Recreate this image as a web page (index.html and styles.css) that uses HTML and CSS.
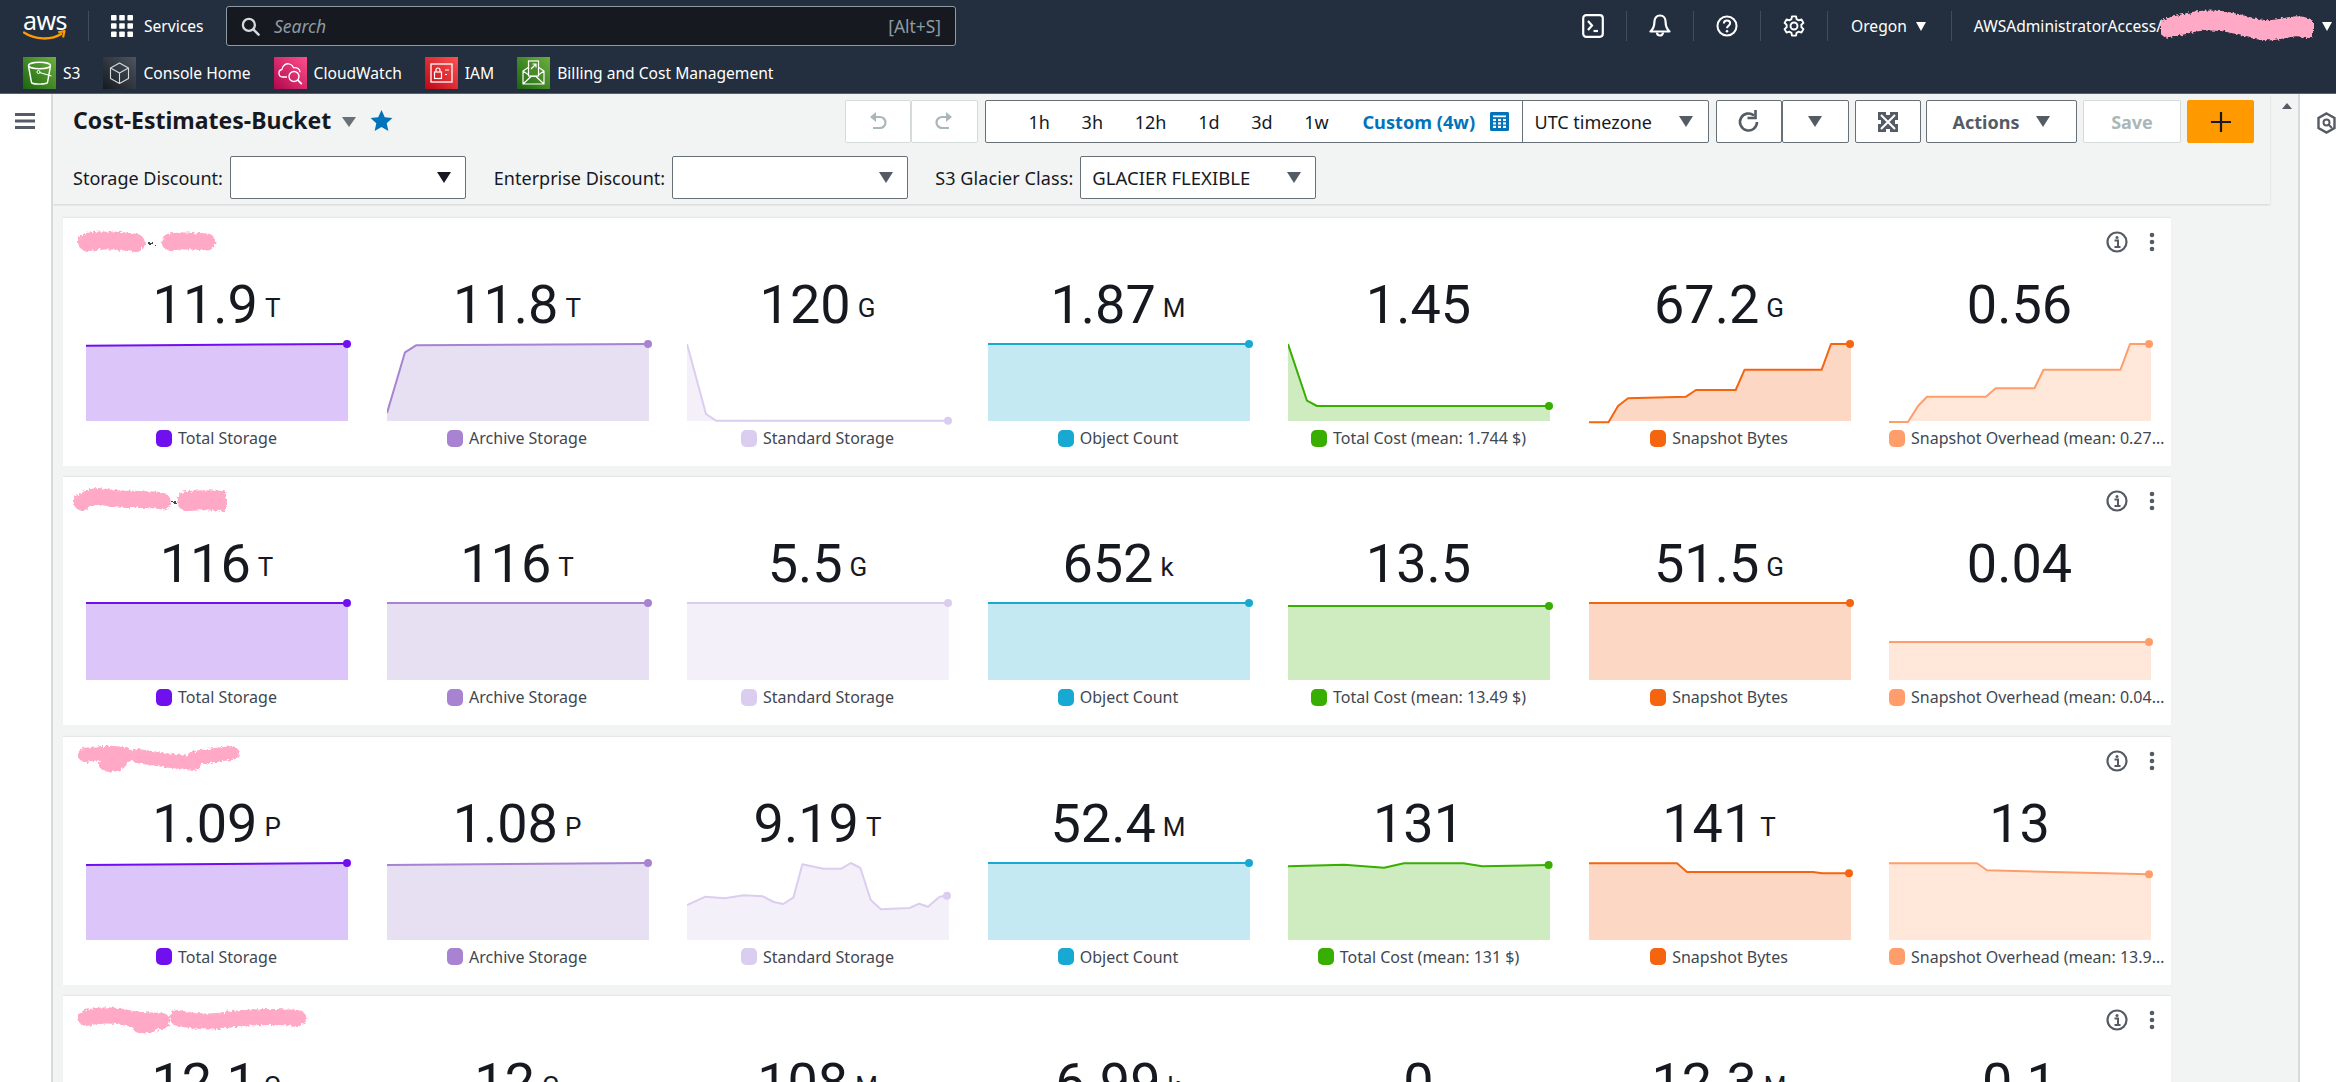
FILE: index.html
```html
<!DOCTYPE html>
<html lang="en">
<head>
<meta charset="utf-8">
<title>Cost-Estimates-Bucket</title>
<link rel="stylesheet" href="styles.css">
</head>
<body>
<header class="topnav">
  <div class="navrow">
    <a class="logo"><span class="logo-text">aws</span>
      <svg class="smile" viewBox="0 0 44 12"><path d="M1 2.5C12 10 29 10.5 39 4" fill="none" stroke="#f90" stroke-width="2.4" stroke-linecap="round"/><path d="M36 2.2L42.5 1 41 7.5" fill="none" stroke="#f90" stroke-width="2.2" stroke-linejoin="round"/></svg>
    </a>
    <span class="sep sep-logo"></span>
    <svg class="grid-ico" viewBox="0 0 22 22"><g fill="#fff"><rect width="5.6" height="5.6" rx=".8"/><rect x="8.2" width="5.6" height="5.6" rx=".8"/><rect x="16.4" width="5.6" height="5.6" rx=".8"/><rect y="8.2" width="5.6" height="5.6" rx=".8"/><rect x="8.2" y="8.2" width="5.6" height="5.6" rx=".8"/><rect x="16.4" y="8.2" width="5.6" height="5.6" rx=".8"/><rect y="16.4" width="5.6" height="5.6" rx=".8"/><rect x="8.2" y="16.4" width="5.6" height="5.6" rx=".8"/><rect x="16.4" y="16.4" width="5.6" height="5.6" rx=".8"/></g></svg>
    <span class="services">Services</span>
    <div class="search">
      <svg class="search-ico" viewBox="0 0 20 20"><circle cx="8.3" cy="8.3" r="6.3" fill="none" stroke="#d5dbdb" stroke-width="2.4"/><path d="M13 13l5.5 5.5" stroke="#d5dbdb" stroke-width="2.6" stroke-linecap="round"/></svg>
      <span class="search-ph">Search</span>
      <span class="search-key">[Alt+S]</span>
    </div>
    <div class="navright">
      <svg class="nav-ico" viewBox="0 0 22 24"><rect x="1.2" y="1.2" width="19.6" height="21.6" rx="3" fill="none" stroke="#fff" stroke-width="2.2"/><path d="M6 7l4 4.5L6 16" fill="none" stroke="#fff" stroke-width="2.2"/><path d="M11.5 17h4.5" stroke="#fff" stroke-width="2.2"/></svg>
      <span class="sep"></span>
      <svg class="nav-ico" viewBox="0 0 22 24"><path d="M11 1.5c-3.6 0-5.6 2.800-5.6 6.500 0 4-.8 6.500-3.900 9.500h19c-3.100-3-3.900-5.500-3.900-9.500 0-3.700-2-6.500-5.600-6.500z" fill="none" stroke="#fff" stroke-width="2.200" stroke-linejoin="round"/><path d="M8 18.500a3 3 0 0 0 6 0" fill="none" stroke="#fff" stroke-width="2.200"/></svg>
      <span class="sep"></span>
      <svg class="nav-ico" viewBox="0 0 24 24"><circle cx="12" cy="12" r="10.400" fill="none" stroke="#fff" stroke-width="2.200"/><path d="M8.600 9.300c0-2 1.500-3.200 3.400-3.200s3.400 1.200 3.400 3c0 2.700-3.400 2.700-3.400 5.400" fill="none" stroke="#fff" stroke-width="2.200"/><circle cx="12" cy="17.800" r="1.400" fill="#fff"/></svg>
      <span class="sep"></span>
      <svg class="nav-ico" viewBox="0 0 24 24"><path d="M9.800 1.500h4.400l.6 3 2.400 1.300 2.900-1 2.200 3.800-2.300 2 .1 2.800 2.200 2-2.200 3.800-2.900-1-2.400 1.300-.6 3H9.800l-.6-3-2.400-1.300-2.900 1-2.200-3.800 2.300-2-.1-2.800-2.200-2 2.200-3.800 2.900 1 2.400-1.300z" fill="none" stroke="#fff" stroke-width="2.100" stroke-linejoin="round"/><circle cx="12" cy="12" r="3.800" fill="none" stroke="#fff" stroke-width="2.100"/></svg>
      <span class="sep"></span>
      <span class="region">Oregon</span><span class="caret caret-white"></span>
      <span class="sep sep-user"></span>
      <span class="account">AWSAdministratorAccess/</span>
      <svg class="blob blob-user" width="152" height="32" viewBox="0 0 152 32"><defs><filter id="rough" x="-10%" y="-30%" width="120%" height="160%"><feTurbulence type="fractalNoise" baseFrequency=".35" numOctaves="2" seed="4"/><feDisplacementMap in="SourceGraphic" scale="5"/></filter></defs><path d="M8 18C30 12 40 9 60 11S95 22 112 20 134 14 145 18" fill="none" stroke="#ffa9c6" stroke-width="20" stroke-linecap="round"/></svg>
      <span class="caret caret-white caret-user"></span>
    </div>
  </div>
  <div class="navrow favs">
    <a class="fav"><svg class="tile" viewBox="0 0 33 32"><defs><linearGradient id="g1" x1="0" y1="1" x2="1" y2="0"><stop offset="0" stop-color="#1b660f"/><stop offset="1" stop-color="#6cae3e"/></linearGradient></defs><rect width="33" height="32" fill="url(#g1)"/><path d="M5.500 9l3 16.500c.2 1 6 1.600 8 1.600s7.800-.6 8-1.600l3-16.500" fill="none" stroke="#fff" stroke-width="1.400"/><ellipse cx="16.500" cy="8.500" rx="11" ry="3.200" fill="none" stroke="#fff" stroke-width="1.400"/><circle cx="15.500" cy="15" r="1.500" fill="none" stroke="#fff"/><path d="M16.500 15.500l12 3.500" stroke="#fff" stroke-width="1.200"/></svg><span>S3</span></a>
    <a class="fav"><svg class="tile" viewBox="0 0 33 32"><defs><linearGradient id="g2" x1="0" y1="1" x2="1" y2="0"><stop offset="0" stop-color="#16191f"/><stop offset="1" stop-color="#4d5560"/></linearGradient></defs><rect width="33" height="32" fill="url(#g2)"/><path d="M16.500 6l9 5v10.500l-9 5-9-5V11zM7.500 11l9 5 9-5M16.500 16v10.500" fill="none" stroke="#d5dbdb" stroke-width="1.100" stroke-linejoin="round"/></svg><span>Console Home</span></a>
    <a class="fav"><svg class="tile" viewBox="0 0 33 32"><defs><linearGradient id="g3" x1="0" y1="1" x2="1" y2="0"><stop offset="0" stop-color="#b0084d"/><stop offset="1" stop-color="#ff4f8b"/></linearGradient></defs><rect width="33" height="32" fill="url(#g3)"/><path d="M13 20H8.500a3.800 3.800 0 0 1-.6-7.500C8.500 8.500 12 6 15.500 7c2 .6 3.500 2 4 3.700 3.500-.7 6.500 1.500 6.500 4.500" fill="none" stroke="#fff" stroke-width="1.300"/><circle cx="20" cy="19.500" r="5" fill="none" stroke="#fff" stroke-width="1.400"/><path d="M23.800 23.200l4 4" stroke="#fff" stroke-width="1.800"/></svg><span>CloudWatch</span></a>
    <a class="fav"><svg class="tile" viewBox="0 0 33 32"><defs><linearGradient id="g4" x1="0" y1="1" x2="1" y2="0"><stop offset="0" stop-color="#bd0816"/><stop offset="1" stop-color="#ff5252"/></linearGradient></defs><rect width="33" height="32" fill="url(#g4)"/><rect x="6" y="7" width="21" height="18" fill="none" stroke="#fff" stroke-width="1.300"/><rect x="9.500" y="15" width="7" height="6.500" fill="none" stroke="#fff" stroke-width="1.200"/><path d="M11 15v-2a2 2 0 0 1 4 0v2M20 13h4M20 17.500h2" fill="none" stroke="#fff" stroke-width="1.200"/></svg><span>IAM</span></a>
    <a class="fav"><svg class="tile" viewBox="0 0 33 32"><defs><linearGradient id="g5" x1="0" y1="1" x2="1" y2="0"><stop offset="0" stop-color="#1b660f"/><stop offset="1" stop-color="#6cae3e"/></linearGradient></defs><rect width="33" height="32" fill="url(#g5)"/><path d="M6 14v13h21V14l-10.500-7zM6 27l8-7.500h5L27 27M6 14l8 5.500M27 14l-8 5.500" fill="none" stroke="#fff" stroke-width="1.200" stroke-linejoin="round"/><rect x="11.500" y="4" width="10" height="15" fill="#4a8a28" stroke="#fff" stroke-width="1.200"/><path d="M14 12l5-5M15.500 7H19v3.500" fill="none" stroke="#fff" stroke-width="1.200"/></svg><span>Billing and Cost Management</span></a>
  </div>
</header>

<div class="main">
  <aside class="sidebar">
    <svg class="burger" viewBox="0 0 20 16"><path d="M0 1.500h20M0 8h20M0 14.500h20" stroke="#545b64" stroke-width="3"/></svg>
  </aside>

  <div class="content">
    <section class="toolbar">
      <div class="bar-row">
        <h1 class="title">Cost-Estimates-Bucket</h1>
        <span class="caret caret-title"></span>
        <svg class="star" viewBox="0 0 24 23"><path d="M12 0l3.600 8 8.400.800-6.300 5.700 1.800 8.500L12 18.600 4.500 23l1.800-8.500L0 8.800 8.400 8z" fill="#0073bb"/></svg>
        <div class="controls">
          <div class="btn-pair">
            <button class="btn btn-off btn-icon"><svg class="ico" viewBox="0 0 20 22"><path d="M3 6h9a5.500 5.500 0 0 1 0 11H5" fill="none" stroke="#aab7b8" stroke-width="2.200"/><path d="M8 1L2 6l6 5z" fill="#aab7b8"/></svg></button>
            <button class="btn btn-off btn-icon"><svg class="ico" viewBox="0 0 20 22"><path d="M17 6H8a5.500 5.500 0 0 0 0 11h7" fill="none" stroke="#aab7b8" stroke-width="2.200"/><path d="M12 1l6 5-6 5z" fill="#aab7b8"/></svg></button>
          </div>
          <div class="timebox">
            <div class="ranges">
              <span class="range">1h</span><span class="range">3h</span><span class="range">12h</span><span class="range">1d</span><span class="range">3d</span><span class="range">1w</span>
              <span class="range range-on">Custom (4w)</span>
              <svg class="cal" viewBox="0 0 19 22" preserveAspectRatio="none"><rect width="19" height="22" rx="1.500" fill="#0073bb"/><g fill="#fff"><rect x="3" y="4" width="13" height="2"/><rect x="3" y="8" width="3" height="2.500"/><rect x="8" y="8" width="3" height="2.500"/><rect x="13" y="8" width="3" height="2.500"/><rect x="3" y="12" width="3" height="2.500"/><rect x="8" y="12" width="3" height="2.500"/><rect x="13" y="12" width="3" height="2.500"/><rect x="3" y="16" width="3" height="2.500"/><rect x="8" y="16" width="3" height="2.500"/><rect x="13" y="16" width="3" height="2.500"/></g></svg>
            </div>
            <div class="tz"><span>UTC timezone</span><span class="caret"></span></div>
          </div>
          <div class="btn-pair">
            <button class="btn btn-icon"><svg class="ico ico-lg" viewBox="0 0 24 24"><path d="M20 12a8.500 8.500 0 1 1-3-6.500" fill="none" stroke="#545b64" stroke-width="2.600"/><path d="M18.500 0v8h-8" fill="none" stroke="#545b64" stroke-width="2.600"/></svg></button>
            <button class="btn btn-icon"><span class="caret"></span></button>
          </div>
          <button class="btn btn-icon btn-tight"><svg class="ico ico-exp" viewBox="0 0 20 20"><rect width="20" height="20" fill="#545b64"/><path d="M3 3l14 14M17 3L3 17" stroke="#fff" stroke-width="2"/><path d="M8 0v3h4V0M8 20v-3h4v3M0 8h3v4H0M20 8h-3v4h3" fill="#fff"/></svg></button>
          <button class="btn btn-actions btn-tight"><span>Actions</span><span class="caret"></span></button>
          <button class="btn btn-off btn-save">Save</button>
          <button class="btn btn-add"><svg class="ico" viewBox="0 0 20 20"><path d="M10 0v20M0 10h20" stroke="#16191f" stroke-width="2.200"/></svg></button>
        </div>
      </div>
      <div class="bar-row">
        <label class="lbl">Storage Discount:</label>
        <div class="select"><span class="caret caret-dark"></span></div>
        <label class="lbl lbl-next">Enterprise Discount:</label>
        <div class="select"><span class="caret"></span></div>
        <label class="lbl lbl-next lbl-wide">S3 Glacier Class:</label>
        <div class="select"><span>GLACIER FLEXIBLE</span><span class="caret"></span></div>
      </div>
    </section>

    <div class="panels">
      <!-- row 1 -->
      <article class="panel">
        <div class="panel-head">
          <svg class="blob" width="150" height="30" viewBox="0 0 150 30"><path d="M9 15c14-2 30-2 49 1" fill="none" stroke="#ffa9c6" stroke-width="18" stroke-linecap="round"/><path d="M92 15c15-2 24-1 37 0" fill="none" stroke="#ffa9c6" stroke-width="17" stroke-linecap="round"/><path d="M70 16h6" stroke="#414750" stroke-width="2"/></svg>
          <svg class="info" viewBox="0 0 22 22"><circle cx="11" cy="11" r="9.500" fill="none" stroke="#545b64" stroke-width="2.200"/><circle cx="11" cy="6.500" r="1.500" fill="#545b64"/><path d="M8.500 9.500H12v6M8.500 16h6" fill="none" stroke="#545b64" stroke-width="2"/></svg>
          <svg class="kebab" viewBox="0 0 6 20"><circle cx="3" cy="3" r="2.300" fill="#545b64"/><circle cx="3" cy="10" r="2.300" fill="#545b64"/><circle cx="3" cy="17" r="2.300" fill="#545b64"/></svg>
        </div>
        <div class="widgets">
          <div class="widget s1"><div class="value">11.9<small>T</small></div><svg class="spark" viewBox="0 -4 266 86"><polygon class="area" points="0,1.700 262,0 262,77 0,77"/><polyline class="line" points="0,1.700 261,0"/><circle class="dot" cx="261" cy="0" r="4"/></svg><div class="legend"><i></i>Total Storage</div></div>
          <div class="widget s2"><div class="value">11.8<small>T</small></div><svg class="spark" viewBox="0 -4 266 86"><polygon class="area" points="0,69 18,8.300 29,1.300 262,0 262,77 0,77"/><polyline class="line" points="0,69 18,8.300 29,1.300 261,0"/><circle class="dot" cx="261" cy="0" r="4"/></svg><div class="legend"><i></i>Archive Storage</div></div>
          <div class="widget s3"><div class="value">120<small>G</small></div><svg class="spark" viewBox="0 -4 266 86"><polygon class="area" points="0,0 19,70 29,76.700 262,76.700 262,77 0,77"/><polyline class="line" points="0,0 19,70 29,76.700 261,76.700"/><circle class="dot" cx="261" cy="76.700" r="4"/></svg><div class="legend"><i></i>Standard Storage</div></div>
          <div class="widget s4"><div class="value">1.87<small>M</small></div><svg class="spark" viewBox="0 -4 266 86"><polygon class="area" points="0,0 262,0 262,77 0,77"/><polyline class="line" points="0,0 261,0"/><circle class="dot" cx="261" cy="0" r="4"/></svg><div class="legend"><i></i>Object Count</div></div>
          <div class="widget s5"><div class="value">1.45</div><svg class="spark" viewBox="0 -4 266 86"><polygon class="area" points="0,0 19,56.700 29,62 262,62 262,77 0,77"/><polyline class="line" points="0,0 19,56.700 29,62 261,62"/><circle class="dot" cx="261" cy="62" r="4"/></svg><div class="legend"><i></i>Total Cost (mean: 1.744 $)</div></div>
          <div class="widget s6"><div class="value">67.2<small>G</small></div><svg class="spark" viewBox="0 -4 266 86"><polygon class="area" points="19.500,77 29,62 39,54.300 97,52.700 107,46 146.700,46 155.600,25.700 232.700,25.700 242,0 262,0 262,77"/><polyline class="line" points="0,78.300 19.500,78.300 29,62 39,54.300 97,52.700 107,46 146.700,46 155.600,25.700 232.700,25.700 242,0 261,0"/><circle class="dot" cx="261" cy="0" r="4"/></svg><div class="legend"><i></i>Snapshot Bytes</div></div>
          <div class="widget s7"><div class="value">0.56</div><svg class="spark" viewBox="0 -4 266 86"><polygon class="area" points="19,77 29,62 38,52.700 97,52.700 106.600,44.300 145.500,44.300 154.500,25.700 231.500,25.700 241,0 262,0 262,77"/><polyline class="line" points="0,78 19,78 29,62 38,52.700 97,52.700 106.600,44.300 145.500,44.300 154.500,25.700 231.500,25.700 241,0 260,0"/><circle class="dot" cx="260" cy="0" r="4"/></svg><div class="legend"><i></i>Snapshot Overhead (mean: 0.27…</div></div>
        </div>
      </article>
      <!-- row 2 -->
      <article class="panel">
        <div class="panel-head">
          <svg class="blob blob-r2" width="152" height="30" viewBox="0 0 152 30"><path d="M8 16c8-5 14-7 28-4 24 3 38 0 52 3" fill="none" stroke="#ffa9c6" stroke-width="17" stroke-linecap="round"/><path d="M113 15c12-1 24-1 36 0" fill="none" stroke="#ffa9c6" stroke-width="20" stroke-linecap="round"/><path d="M98 16h4" stroke="#414750" stroke-width="2"/></svg>
          <svg class="info" viewBox="0 0 22 22"><circle cx="11" cy="11" r="9.500" fill="none" stroke="#545b64" stroke-width="2.200"/><circle cx="11" cy="6.500" r="1.500" fill="#545b64"/><path d="M8.500 9.500H12v6M8.500 16h6" fill="none" stroke="#545b64" stroke-width="2"/></svg>
          <svg class="kebab" viewBox="0 0 6 20"><circle cx="3" cy="3" r="2.300" fill="#545b64"/><circle cx="3" cy="10" r="2.300" fill="#545b64"/><circle cx="3" cy="17" r="2.300" fill="#545b64"/></svg>
        </div>
        <div class="widgets">
          <div class="widget s1"><div class="value">116<small>T</small></div><svg class="spark" viewBox="0 -4 266 86"><polygon class="area" points="0,0 262,0 262,77 0,77"/><polyline class="line" points="0,0 261,0"/><circle class="dot" cx="261" cy="0" r="4"/></svg><div class="legend"><i></i>Total Storage</div></div>
          <div class="widget s2"><div class="value">116<small>T</small></div><svg class="spark" viewBox="0 -4 266 86"><polygon class="area" points="0,0 262,0 262,77 0,77"/><polyline class="line" points="0,0 261,0"/><circle class="dot" cx="261" cy="0" r="4"/></svg><div class="legend"><i></i>Archive Storage</div></div>
          <div class="widget s3"><div class="value">5.5<small>G</small></div><svg class="spark" viewBox="0 -4 266 86"><polygon class="area" points="0,0 262,0 262,77 0,77"/><polyline class="line" points="0,0 261,0"/><circle class="dot" cx="261" cy="0" r="4"/></svg><div class="legend"><i></i>Standard Storage</div></div>
          <div class="widget s4"><div class="value">652<small>k</small></div><svg class="spark" viewBox="0 -4 266 86"><polygon class="area" points="0,0 262,0 262,77 0,77"/><polyline class="line" points="0,0 261,0"/><circle class="dot" cx="261" cy="0" r="4"/></svg><div class="legend"><i></i>Object Count</div></div>
          <div class="widget s5"><div class="value">13.5</div><svg class="spark" viewBox="0 -4 266 86"><polygon class="area" points="0,3 262,3 262,77 0,77"/><polyline class="line" points="0,3 261,3"/><circle class="dot" cx="261" cy="3" r="4"/></svg><div class="legend"><i></i>Total Cost (mean: 13.49 $)</div></div>
          <div class="widget s6"><div class="value">51.5<small>G</small></div><svg class="spark" viewBox="0 -4 266 86"><polygon class="area" points="0,0 262,0 262,77 0,77"/><polyline class="line" points="0,0 261,0"/><circle class="dot" cx="261" cy="0" r="4"/></svg><div class="legend"><i></i>Snapshot Bytes</div></div>
          <div class="widget s7"><div class="value">0.04</div><svg class="spark" viewBox="0 -4 266 86"><polygon class="area" points="0,39 262,39 262,77 0,77"/><polyline class="line" points="0,39 260,39"/><circle class="dot" cx="260" cy="39" r="4"/></svg><div class="legend"><i></i>Snapshot Overhead (mean: 0.04…</div></div>
        </div>
      </article>
      <!-- row 3 -->
      <article class="panel">
        <div class="panel-head">
          <svg class="blob" width="162" height="30" viewBox="0 0 162 30"><path d="M7 9c16-3 30-3 42 0M28 18c6 2 10 1 14-2M60 10c18 3 40 6 56 7M116 12c12-1 24-4 38-5" fill="none" stroke="#ffa9c6" stroke-width="14" stroke-linecap="round"/></svg>
          <svg class="info" viewBox="0 0 22 22"><circle cx="11" cy="11" r="9.500" fill="none" stroke="#545b64" stroke-width="2.200"/><circle cx="11" cy="6.500" r="1.500" fill="#545b64"/><path d="M8.500 9.500H12v6M8.500 16h6" fill="none" stroke="#545b64" stroke-width="2"/></svg>
          <svg class="kebab" viewBox="0 0 6 20"><circle cx="3" cy="3" r="2.300" fill="#545b64"/><circle cx="3" cy="10" r="2.300" fill="#545b64"/><circle cx="3" cy="17" r="2.300" fill="#545b64"/></svg>
        </div>
        <div class="widgets">
          <div class="widget s1"><div class="value">1.09<small>P</small></div><svg class="spark" viewBox="0 -4 266 86"><polygon class="area" points="0,2 262,0 262,77 0,77"/><polyline class="line" points="0,2 261,0"/><circle class="dot" cx="261" cy="0" r="4"/></svg><div class="legend"><i></i>Total Storage</div></div>
          <div class="widget s2"><div class="value">1.08<small>P</small></div><svg class="spark" viewBox="0 -4 266 86"><polygon class="area" points="0,2 262,0 262,77 0,77"/><polyline class="line" points="0,2 261,0"/><circle class="dot" cx="261" cy="0" r="4"/></svg><div class="legend"><i></i>Archive Storage</div></div>
          <div class="widget s3"><div class="value">9.19<small>T</small></div><svg class="spark" viewBox="0 -4 266 86"><polygon class="area" points="0,42 18.500,33.700 37.600,35.300 56.800,32.300 75.900,33.300 86.700,39 96.300,41 106.500,34.300 115.400,1.300 136.400,5.700 154.300,5.700 163.800,0 173.400,5 183.700,37 193.900,46.300 222.600,45 232.200,40.700 241,43.700 252.600,33.700 262,32.700 262,77 0,77"/><polyline class="line" points="0,42 18.500,33.700 37.600,35.300 56.800,32.300 75.900,33.300 86.700,39 96.300,41 106.500,34.300 115.400,1.300 136.400,5.700 154.300,5.700 163.800,0 173.400,5 183.700,37 193.900,46.300 222.600,45 232.200,40.700 241,43.700 252.600,33.700 260,32.700"/><circle class="dot" cx="260" cy="32.700" r="4"/></svg><div class="legend"><i></i>Standard Storage</div></div>
          <div class="widget s4"><div class="value">52.4<small>M</small></div><svg class="spark" viewBox="0 -4 266 86"><polygon class="area" points="0,0 262,0 262,77 0,77"/><polyline class="line" points="0,0 261,0"/><circle class="dot" cx="261" cy="0" r="4"/></svg><div class="legend"><i></i>Object Count</div></div>
          <div class="widget s5"><div class="value">131</div><svg class="spark" viewBox="0 -4 266 86"><polygon class="area" points="0,3.300 56,1.700 96,4.700 116,.3 175.600,.3 194,3.300 262,2 262,77 0,77"/><polyline class="line" points="0,3.300 56,1.700 96,4.700 116,.3 175.600,.3 194,3.300 260.600,2"/><circle class="dot" cx="260.600" cy="2" r="4"/></svg><div class="legend"><i></i>Total Cost (mean: 131 $)</div></div>
          <div class="widget s6"><div class="value">141<small>T</small></div><svg class="spark" viewBox="0 -4 266 86"><polygon class="area" points="0,.3 88,.3 98,9 224,9 233,10.300 262,10.300 262,77 0,77"/><polyline class="line" points="0,.3 88,.3 98,9 224,9 233,10.300 260,10.300"/><circle class="dot" cx="260" cy="10.300" r="4"/></svg><div class="legend"><i></i>Snapshot Bytes</div></div>
          <div class="widget s7"><div class="value">13</div><svg class="spark" viewBox="0 -4 266 86"><polygon class="area" points="0,.3 88,.3 98,7.300 262,11.300 262,77 0,77"/><polyline class="line" points="0,.3 88,.3 98,7.300 260,11.300"/><circle class="dot" cx="260" cy="11.300" r="4"/></svg><div class="legend"><i></i>Snapshot Overhead (mean: 13.9…</div></div>
        </div>
      </article>
      <!-- row 4 -->
      <article class="panel">
        <div class="panel-head">
          <svg class="blob" width="228" height="30" viewBox="0 0 228 30"><path d="M8 13c16-4 30-3 42 0 14 3 24 2 34 3M62 20c6 1 10 0 14-2M100 13c14 3 30 5 48 2 20-3 46-4 72-2" fill="none" stroke="#ffa9c6" stroke-width="16" stroke-linecap="round"/></svg>
          <svg class="info" viewBox="0 0 22 22"><circle cx="11" cy="11" r="9.500" fill="none" stroke="#545b64" stroke-width="2.200"/><circle cx="11" cy="6.500" r="1.500" fill="#545b64"/><path d="M8.500 9.500H12v6M8.500 16h6" fill="none" stroke="#545b64" stroke-width="2"/></svg>
          <svg class="kebab" viewBox="0 0 6 20"><circle cx="3" cy="3" r="2.300" fill="#545b64"/><circle cx="3" cy="10" r="2.300" fill="#545b64"/><circle cx="3" cy="17" r="2.300" fill="#545b64"/></svg>
        </div>
        <div class="widgets">
          <div class="widget"><div class="value">12.1<small>G</small></div></div>
          <div class="widget"><div class="value">12<small>G</small></div></div>
          <div class="widget"><div class="value">108<small>M</small></div></div>
          <div class="widget"><div class="value">6.99<small>k</small></div></div>
          <div class="widget"><div class="value">0</div></div>
          <div class="widget"><div class="value">12.3<small>M</small></div></div>
          <div class="widget"><div class="value">0.1</div></div>
        </div>
      </article>
    </div>
    <span class="scroll-up"></span>
  </div>

  <aside class="rightbar">
    <svg class="hex" viewBox="0 0 19 22"><path d="M9.500 1.500L17.500 6v10l-8 4.500-8-4.500V6z" fill="none" stroke="#545b64" stroke-width="2.400"/><circle cx="9.500" cy="10.500" r="3" fill="none" stroke="#545b64" stroke-width="2"/><path d="M12 13l3 3" stroke="#545b64" stroke-width="2"/></svg>
  </aside>
</div>
</body>
</html>
```

FILE: styles.css
```css
* { box-sizing: border-box; }
html, body { margin: 0; height: 100%; overflow: hidden; }
body { font-family: "Noto Sans", Arial, sans-serif; color: #16191f; background: #f2f3f3; width: 2336px; height: 1082px; }

.topnav { height: 94px; background: #232f3e; color: #fff; border-bottom: 1px solid #59616b; }
.navrow { display: flex; align-items: center; height: 52px; padding-left: 23px; }
.logo { display: flex; flex-direction: column; width: 42px; height: 32px; }
.logo-text { font: 400 25px/20px "Noto Sans", sans-serif; color: #fff; letter-spacing: -.6px; }
.smile { width: 43px; height: 12px; }
.sep { width: 1px; height: 30px; background: #414d5c; flex: none; }
.sep-logo { margin: 0 22px 0 23px; }
.grid-ico { width: 22px; height: 22px; flex: none; }
.services { font-size: 15.600px; margin-left: 11px; width: 61px; white-space: nowrap; }
.search { display: flex; align-items: center; width: 730px; height: 40px; margin-left: 21px; background: #16191f; border: 1px solid #8d9ba3; border-radius: 3px; padding: 0 14px; }
.search-ico { width: 19px; height: 19px; flex: none; }
.search-ph { font-style: italic; color: #8d9ba3; font-size: 17.500px; margin-left: 14px; }
.search-key { margin-left: auto; color: #8d9ba3; font-size: 17.400px; }
.navright { display: flex; align-items: center; margin-left: auto; padding-right: 4px; height: 52px; }
.nav-ico { width: 22px; height: 24px; flex: none; margin: 0 22px; }
.navright .sep { height: 30px; }
.region { font-size: 15.600px; margin-left: 23px; }
.account { font-size: 15.600px; margin-left: 22px; white-space: nowrap; }
.sep-user { margin-left: 25px; }
.blob-user { margin-left: -1px; flex: none; }
.caret-user { margin-left: 4px; }

.favs { height: 41px; align-items: flex-start; padding-top: 5px; gap: 23px; }
.fav { display: flex; align-items: center; gap: 7px; font-size: 15.600px; height: 32px; white-space: nowrap; }
.tile { width: 33px; height: 32px; flex: none; }

.caret { display: inline-block; width: 0; height: 0; flex: none; border-left: 7px solid transparent; border-right: 7px solid transparent; border-top: 11px solid #545b64; }
.caret-white { border-left-width: 5.500px; border-right-width: 5.500px; border-top: 9px solid #fff; margin-left: 9px; }
.caret-dark { border-top-color: #16191f; }
.caret-title { margin-left: 11px; border-top-color: #687078; border-top-width: 10px; }

.main { display: flex; height: 988px; }
.sidebar { width: 53px; flex: none; background: #fff; border-right: 2px solid #d5dbdb; padding: 19px 0 0 15px; }
.burger { width: 20px; height: 16px; display: block; }
.content { flex: 1; position: relative; min-width: 0; overflow: hidden; }
.rightbar { width: 38px; flex: none; background: #fff; border-left: 2px solid #d5dbdb; padding: 18px 0 0 17px; }
.hex { width: 19px; height: 22px; display: block; }

.toolbar { width: 2217px; height: 110px; padding: 6px 16px 0 20px; background: #f2f3f3; box-shadow: 0 1px 2px rgba(0, 28, 36, .14); display: flex; flex-direction: column; gap: 13px; }
.bar-row { display: flex; align-items: center; height: 43px; }
.title { font-size: 23px; font-weight: 700; margin: 0 0 4px; white-space: nowrap; }
.star { width: 23px; height: 21px; margin: 0 0 2px 14px; flex: none; }
.controls { display: flex; align-items: center; margin-left: auto; height: 43px; gap: 7px; }
.btn-pair { display: flex; }
.btn { height: 43px; background: #fff; border: 1px solid #687078; border-radius: 2px; font: 700 18px "Noto Sans", sans-serif; color: #545b64; display: flex; align-items: center; justify-content: center; padding: 0; }
.btn-icon { width: 66.500px; }
.btn-tight { margin-left: -1px; }
.btn-actions.btn-tight { margin-left: -2px; }
.btn-off { border-color: #d5dbdb; color: #aab7b8; }
.ico { width: 20px; height: 22px; }
.ico-lg { width: 24px; height: 24px; }
.ico-exp { width: 20px; height: 20px; }
.btn-actions { width: 151px; gap: 17px; }
.btn-save { width: 98px; margin-left: -1px; }
.btn-add { width: 67px; background: #f90; border-color: #f90; margin-left: -1px; }
.timebox { display: flex; width: 724px; height: 43px; background: #fff; border: 1px solid #687078; border-radius: 2px; font-size: 18px; }
.ranges { display: flex; align-items: center; width: 537px; border-right: 1px solid #687078; padding-left: 43px; flex: none; white-space: nowrap; }
.range { margin-right: 31.700px; }
.range-on { color: #0073bb; font-weight: 700; font-size: 18.200px; margin-right: 15px; margin-left: 2px; }
.cal { width: 19px; height: 19px; flex: none; }
.tz { display: flex; align-items: center; justify-content: space-between; flex: 1; padding: 0 15px 0 12px; white-space: nowrap; }
.lbl { font-size: 18px; white-space: nowrap; margin-right: 7px; color: #16191f; }
.lbl-next { margin-left: 28px; }
.lbl-wide { margin-left: 27px; letter-spacing: .1px; }
.select { width: 236px; height: 43px; background: #fff; border: 1px solid #687078; border-radius: 2px; display: flex; align-items: center; justify-content: flex-end; padding: 0 14px 0 11px; font-size: 18.500px; white-space: nowrap; }
.select span:first-child:not(.caret) { margin-right: auto; }

.panels { display: flex; flex-direction: column; gap: 11.300px; width: 2108px; margin: 14px 0 0 10px; }
.panel { height: 248px; flex: none; background: #fff; padding: 0 19px 0 23px; box-shadow: 0 -1px 1px rgba(0, 28, 36, .05); }
.panel-head { display: flex; align-items: center; height: 48px; margin-left: -8px; }
.blob { flex: none; display: block; filter: url(#rough); }
.blob-r2 { margin-left: -4px; }
.info { width: 22px; height: 22px; margin-left: auto; flex: none; }
.kebab { width: 6px; height: 20px; margin-left: 21px; margin-right: -3px; flex: none; }
.widgets { display: grid; grid-template-columns: repeat(7, 263px); column-gap: 37.500px; }
.widget { display: flex; flex-direction: column; min-width: 0; }
.value { font: 400 54px/77px Roboto, sans-serif; text-align: center; height: 74px; color: #16191f; white-space: nowrap; margin-left: -2px; }
.value small { font-size: 26px; margin-left: 7px; position: relative; top: -6px; }
.spark { width: 266px; height: 86px; display: block; flex: none; }
.area { stroke: none; }
.line { fill: none; stroke-width: 2; stroke-linejoin: round; }
.dot { stroke: none; }
.legend { display: flex; align-items: center; justify-content: center; gap: 6px; height: 26px; margin: -1px 0 0 -2px; font-size: 16px; color: #414750; white-space: nowrap; }
.legend i { width: 16px; height: 17px; border-radius: 5px; flex: none; }
.s7 .legend { justify-content: flex-start; margin-left: 0; }

.s1 .area { fill: #dcc6f9; } .s1 .line { stroke: #7010ef; } .s1 .dot, .s1 i { fill: #7010ef; background: #7010ef; }
.s2 .area { fill: #e7e0f2; } .s2 .line { stroke: #a783d1; } .s2 .dot, .s2 i { fill: #a783d1; background: #a783d1; }
.s3 .area { fill: #f4f0fa; } .s3 .line { stroke: #dbcdf0; } .s3 .dot, .s3 i { fill: #dbcdf0; background: #dbcdf0; }
.s4 .area { fill: #c5e9f3; } .s4 .line { stroke: #17a9d1; } .s4 .dot, .s4 i { fill: #17a9d1; background: #17a9d1; }
.s5 .area { fill: #cfecc0; } .s5 .line { stroke: #37ae00; } .s5 .dot, .s5 i { fill: #37ae00; background: #37ae00; }
.s6 .area { fill: #fcd8c4; } .s6 .line { stroke: #f5640f; } .s6 .dot, .s6 i { fill: #f5640f; background: #f5640f; }
.s7 .area { fill: #ffe7da; } .s7 .line { stroke: #ff9e6b; } .s7 .dot, .s7 i { fill: #ff9e6b; background: #ff9e6b; }

.scroll-up { position: absolute; right: 6px; top: 9px; width: 0; height: 0; border-left: 5.500px solid transparent; border-right: 5.500px solid transparent; border-bottom: 6px solid #545b64; }
```
